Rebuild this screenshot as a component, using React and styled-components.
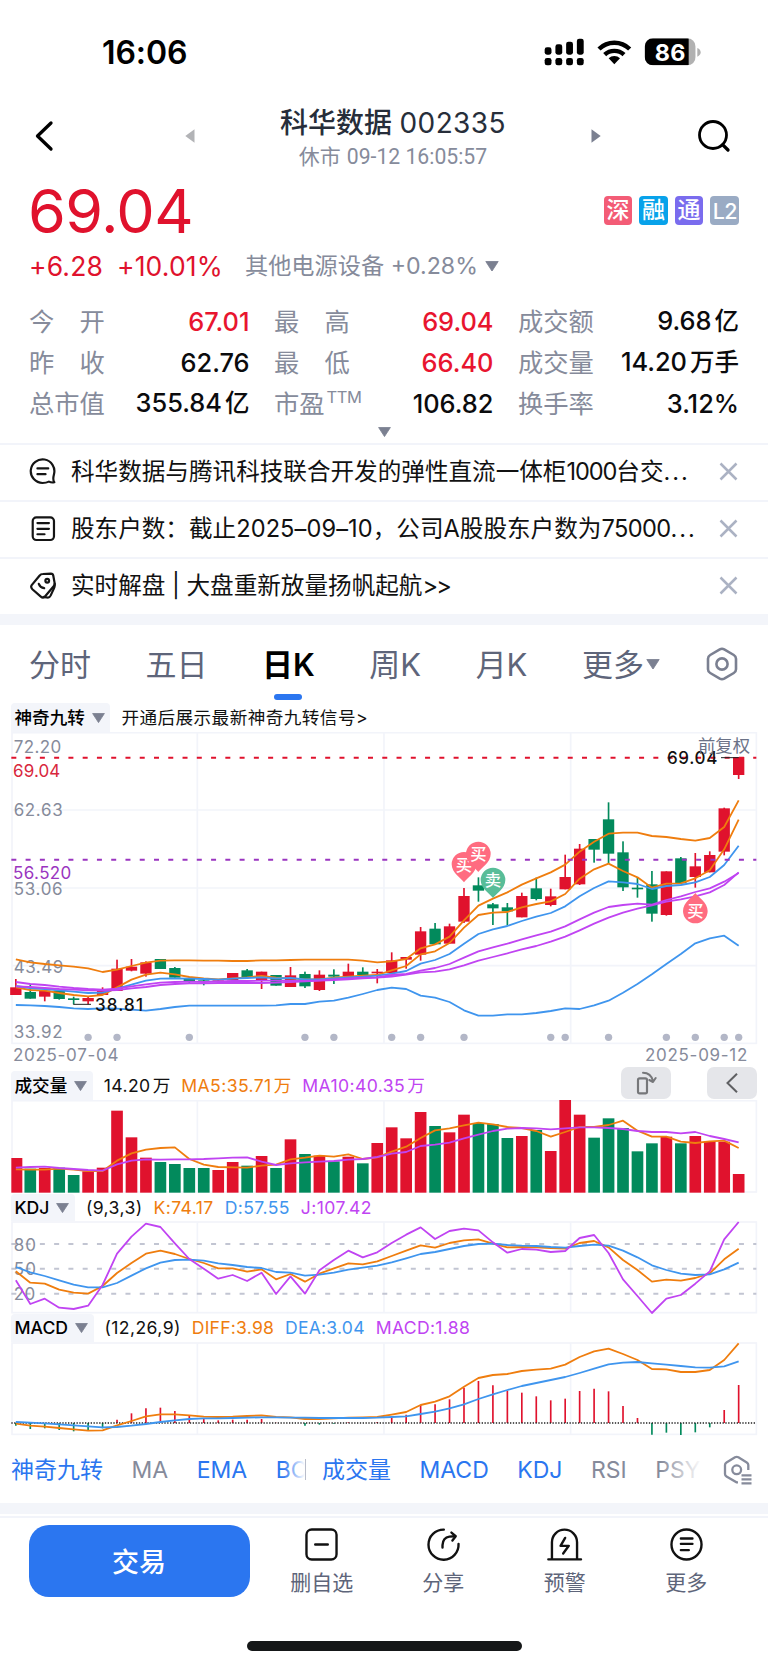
import React from "react";
import styled, { createGlobalStyle } from "styled-components";

const RED = "#e0122d";
const GREEN = "#028a5c";
const ORANGE = "#ef7d0e";
const BLUE = "#3f95ee";
const PURPLE = "#c044f2";
const GREY = "#868b9b";
const LINE = "#f2f4fa";
const PRIMARY = "#2b76f0";

// chart coordinates are in @3x pixels
const cx = i => 47.5 + i * 43.37;

// [up/down, high, body top, body bottom, low]
const candles = [
  ["r", 762, 787, 810, 810], ["g", 780, 801, 821, 821], ["r", 795, 797, 815, 829],
  ["g", 795, 797, 822, 824], ["g", 815, 820, 825, 838], ["r", 815, 819, 829, 838],
  ["r", 787, 798, 810, 810], ["r", 704, 731, 798, 798], ["r", 702, 725, 737, 739],
  ["r", 709, 712, 746, 755], ["g", 702, 702, 732, 732], ["g", 726, 729, 758, 758],
  ["g", 758, 760, 769, 776], ["g", 762, 766, 769, 781], ["r", 765, 766, 768, 768],
  ["r", 744, 744, 766, 771], ["g", 732, 736, 757, 757], ["r", 740, 740, 765, 792],
  ["g", 750, 750, 782, 782], ["r", 726, 751, 786, 786], ["g", 740, 747, 784, 789],
  ["r", 736, 749, 795, 798], ["g", 733, 749, 755, 777], ["r", 716, 740, 754, 754],
  ["g", 727, 740, 750, 750], ["r", 732, 740, 745, 775], ["r", 682, 706, 744, 744],
  ["r", 696, 696, 704, 731], ["r", 606, 619, 689, 707], ["g", 594, 611, 658, 658],
  ["r", 596, 604, 656, 656], ["r", 489, 513, 590, 594], ["g", 457, 481, 497, 530],
  ["g", 534, 538, 550, 600], ["g", 534, 547, 559, 600], ["r", 503, 513, 577, 577],
  ["g", 458, 490, 522, 526], ["r", 491, 514, 540, 544], ["r", 389, 456, 493, 493],
  ["r", 357, 371, 478, 480], ["g", 342, 342, 374, 413], ["g", 232, 283, 386, 415],
  ["g", 349, 382, 487, 498], ["g", 456, 488, 493, 518], ["g", 438, 478, 566, 590],
  ["r", 439, 439, 570, 572], ["g", 396, 400, 475, 475], ["r", 384, 424, 456, 488],
  ["r", 379, 390, 442, 442], ["r", 248, 250, 380, 391], ["r", 96, 96, 150, 162]
];

const upper = [703, 712, 717, 721, 725, 730, 741, 734, 723, 713, 707, 706, 706, 707, 707, 708, 708, 706, 706, 705, 704, 704, 704, 704, 707, 712, 709, 702, 670, 658, 635, 586, 542, 521, 502, 479, 460, 442, 419, 380, 350, 326, 323, 323, 333, 336, 342, 347, 339, 306, 226];
const ema5 = [787, 795, 797, 804, 810, 814, 810, 787, 764, 749, 743, 748, 756, 760, 763, 760, 757, 753, 758, 760, 763, 763, 758, 755, 752, 750, 736, 723, 688, 679, 654, 608, 570, 563, 561, 547, 537, 529, 507, 461, 433, 416, 438, 457, 488, 476, 475, 460, 436, 373, 284];
const ema10 = [783, 789, 792, 796, 800, 804, 803, 791, 779, 767, 761, 760, 761, 762, 764, 761, 759, 757, 760, 759, 763, 763, 760, 757, 755, 752, 746, 738, 716, 705, 687, 656, 627, 613, 603, 588, 575, 564, 544, 514, 489, 469, 472, 477, 492, 483, 480, 472, 456, 420, 362];
const ema20 = [771, 777, 780, 785, 789, 792, 794, 791, 784, 778, 773, 771, 770, 771, 769, 768, 768, 767, 767, 768, 768, 766, 763, 760, 758, 757, 750, 747, 737, 729, 717, 698, 679, 667, 656, 643, 631, 620, 604, 583, 563, 546, 540, 536, 539, 525, 514, 501, 490, 470, 444];
const ema30 = [784, 786, 789, 792, 794, 796, 797, 795, 790, 786, 780, 777, 775, 775, 774, 774, 774, 774, 773, 771, 769, 767, 765, 763, 760, 758, 755, 749, 742, 740, 733, 721, 707, 696, 685, 673, 663, 650, 635, 616, 596, 578, 563, 551, 541, 530, 523, 514, 502, 480, 442];
const lower = [840, 841, 843, 846, 850, 852, 850, 851, 854, 857, 852, 846, 842, 842, 842, 842, 842, 842, 841, 837, 837, 830, 827, 818, 807, 795, 788, 792, 812, 818, 831, 856, 872, 872, 868, 868, 864, 858, 850, 852, 841, 827, 803, 777, 748, 717, 687, 655, 640, 632, 662];
const eventDots = [5, 7, 12, 20, 22, 26, 28, 31, 37, 38, 41, 45, 47, 49, 50];

const volume = [279, 311, 309, 308, 330, 319, 308, 137, 217, 278, 291, 297, 309, 309, 315, 291, 302, 273, 309, 223, 267, 272, 289, 275, 295, 234, 187, 220, 141, 183, 202, 149, 174, 177, 219, 213, 195, 258, 104, 149, 218, 160, 189, 259, 235, 215, 235, 213, 229, 230, 327];
const volMa5 = [313, 314, 314, 311, 314, 318, 318, 287, 265, 254, 249, 247, 282, 299, 306, 307, 308, 302, 299, 283, 278, 272, 275, 268, 282, 277, 260, 245, 219, 196, 190, 181, 173, 178, 186, 189, 198, 215, 201, 186, 186, 180, 167, 197, 215, 215, 230, 234, 229, 227, 249];
const volMa10 = [308, 306, 305, 309, 312, 315, 317, 298, 287, 283, 284, 283, 283, 282, 280, 278, 277, 290, 300, 295, 292, 290, 288, 284, 282, 276, 266, 261, 243, 239, 233, 220, 209, 198, 191, 189, 190, 193, 190, 187, 187, 189, 192, 198, 201, 201, 205, 201, 213, 222, 232];

const kLine = [619, 653, 656, 674, 683, 686, 663, 624, 594, 566, 557, 567, 582, 594, 610, 610, 620, 613, 643, 627, 650, 626, 610, 595, 598, 589, 573, 557, 541, 548, 534, 526, 523, 536, 547, 546, 547, 549, 551, 534, 528, 547, 585, 615, 650, 644, 647, 639, 625, 583, 551];
const dLine = [606, 622, 633, 646, 659, 667, 667, 654, 632, 610, 593, 585, 584, 587, 595, 600, 606, 609, 621, 623, 632, 629, 623, 614, 608, 602, 592, 580, 567, 561, 552, 543, 537, 536, 540, 542, 543, 546, 548, 543, 539, 542, 557, 577, 601, 615, 626, 630, 628, 613, 593];
const jLine = [646, 717, 701, 728, 732, 722, 660, 566, 515, 476, 486, 535, 582, 611, 641, 630, 648, 623, 687, 634, 686, 616, 585, 557, 577, 562, 534, 509, 487, 522, 498, 491, 496, 532, 563, 552, 554, 561, 558, 519, 510, 564, 643, 693, 744, 701, 690, 656, 619, 523, 471];

const macdBars = [1082, 1092, 1090, 1095, 1099, 1096, 1090, 1064, 1045, 1030, 1028, 1038, 1052, 1061, 1066, 1064, 1064, 1062, 1073, 1074, 1082, 1079, 1076, 1072, 1074, 1071, 1058, 1049, 1020, 1018, 1003, 968, 948, 961, 977, 983, 994, 1006, 1001, 978, 971, 979, 1023, 1059, 1109, 1103, 1110, 1102, 1087, 1035, 960];
const diff = [1076, 1082, 1085, 1089, 1093, 1097, 1096, 1081, 1068, 1054, 1048, 1048, 1051, 1055, 1056, 1055, 1053, 1051, 1056, 1057, 1062, 1062, 1060, 1058, 1057, 1056, 1049, 1041, 1020, 1010, 994, 965, 939, 930, 927, 918, 914, 911, 899, 876, 859, 851, 867, 885, 912, 913, 921, 921, 915, 885, 835];
const dea = [1071, 1073, 1075, 1078, 1081, 1084, 1087, 1086, 1082, 1077, 1071, 1066, 1062, 1060, 1060, 1059, 1058, 1057, 1057, 1058, 1058, 1059, 1059, 1059, 1059, 1058, 1056, 1054, 1047, 1040, 1030, 1018, 1002, 988, 975, 963, 954, 945, 936, 924, 911, 898, 893, 891, 895, 899, 903, 907, 908, 904, 889];

const stats = [
  [["今　开", "67.01", "", true], ["最　高", "69.04", "", true], ["成交额", "9.68", "亿"]],
  [["昨　收", "62.76", ""], ["最　低", "66.40", "", true], ["成交量", "14.20", "万手"]],
  [["总市值", "355.84", "亿"], ["市盈", "106.82", ""], ["换手率", "3.12%", ""]]
];

const Caret = ({ w = 13, h = 10, color = "#7b8091" }) => (
  <svg width={w} height={h} viewBox="0 0 13 10">
    <path d="M0.6 0.5H12.4L6.5 9.6Z" fill={color} stroke={color} strokeWidth="0.8" strokeLinejoin="round" />
  </svg>
);

const Polyline = ({ data, color }) => (
  <polyline
    points={data.map((y, i) => `${cx(i).toFixed(1)},${y}`).join(" ")}
    fill="none"
    stroke={color}
    strokeWidth="5.4"
    strokeLinejoin="round"
  />
);

const Frame = ({ top, bottom, rows = [] }) => (
  <g stroke={LINE} strokeWidth="5" fill="none">
    <rect x="36" y={top} width="2233" height={bottom - top} />
    {[592, 1152, 1712].map(x => (
      <path key={x} d={`M${x} ${top}V${bottom}`} />
    ))}
    {rows.map(y => (
      <path key={y} d={`M36 ${y}H2269`} />
    ))}
  </g>
);

const Label = ({ x, y, w, color = GREY, weight = 400, children }) => (
  <text x={x} y={y + 18.5} fill={color} fontSize="51" fontWeight={weight} textLength={w} lengthAdjust="spacing">
    {children}
  </text>
);

const Pin = ({ x, y, color, up, children }) => {
  const s = up ? -1 : 1;
  return (
    <g>
      <path
        d={`M${x} ${y + s * 54}C${x - 8} ${y + s * 42} ${x - 37} ${y + s * 26} ${x - 37} ${y}A37 37 0 0 ${up ? 0 : 1} ${x + 37} ${y}C${x + 37} ${y + s * 26} ${x + 8} ${y + s * 42} ${x} ${y + s * 54}Z`}
        fill={color}
      />
      <text x={x} y={y + 19} fontSize="49" fontWeight="500" fill="#fff" textAnchor="middle">{children}</text>
    </g>
  );
};

const PriceChart = () => (
  <Plot height="313" viewBox="0 21 2304 939">
    <Frame top={23} bottom={955} rows={[255, 489, 722]} />
    <Label x={41} y={65} w={143}>72.20</Label>
    <Label x={41} y={255} w={147}>62.63</Label>
    <Label x={41} y={490} w={147}>53.06</Label>
    <Label x={41} y={724} w={149}>43.49</Label>
    <Label x={41} y={921} w={147}>33.92</Label>
    {candles.map(([dir, hi, top, bottom, lo], i) => (
      <g key={i} fill={dir === "r" ? RED : GREEN}>
        <rect x={cx(i) - 2.5} y={hi} width="5" height={lo - hi} />
        <rect x={cx(i) - 17} y={top} width="34" height={bottom - top} />
      </g>
    ))}
    <Polyline data={upper} color={ORANGE} />
    <Polyline data={ema5} color={ORANGE} />
    <Polyline data={ema10} color={BLUE} />
    <Polyline data={ema20} color={PURPLE} />
    <Polyline data={ema30} color={PURPLE} />
    <Polyline data={lower} color={BLUE} />
    {eventDots.map(i => (
      <circle key={i} cx={cx(i)} cy="937" r="11" fill="#b3b7c7" />
    ))}
    <path d="M34 98H2269" stroke={RED} strokeWidth="6" strokeDasharray="15 27.8" />
    <path d="M34 404H2269" stroke="#9a35c0" strokeWidth="6" strokeDasharray="15 27.8" />
    <Label x={39} y={136} w={142} color="#d8273d">69.04</Label>
    <Label x={39} y={443} w={175} color="#9a35c0">56.520</Label>
    <path d="M220 838H273M2163 98H2216" stroke="#222" strokeWidth="3" />
    <Label x={285} y={838} w={144} color="#111" weight={500}>38.81</Label>
    <Label x={2001} y={98} w={151} color="#111" weight={500}>69.04</Label>
    <text x="2094" y="82" fontSize="52" fill="#6b7287">前复权</text>
    <Pin x={1392} y={418} color="#ff6c80">买</Pin>
    <Pin x={1435} y={387} color="#ff6c80">买</Pin>
    <Pin x={1479} y={465} color="#58bd98">卖</Pin>
    <Pin x={2086} y={558} color="#ff6c80" up>买</Pin>
  </Plot>
);

const VolumeChart = () => (
  <Plot height="94" viewBox="0 105 2304 282">
    <Frame top={107} bottom={381} />
    {volume.map((y, i) => (
      <rect
        key={i}
        x={i === 0 ? 34 : cx(i) - 17.5}
        y={y}
        width={i === 0 ? 33 : 35}
        height={383 - y}
        fill={candles[i][0] === "r" ? RED : GREEN}
      />
    ))}
    <Polyline data={volMa5} color={ORANGE} />
    <Polyline data={volMa10} color={PURPLE} />
  </Plot>
);

const KdjChart = () => (
  <Plot height="93" viewBox="0 468 2304 279">
    <Frame top={471} bottom={743} />
    {[537, 611, 686].map(y => (
      <path key={y} d={`M34 ${y}H2269`} stroke="#c2c5d2" strokeWidth="6" strokeDasharray="15 27.8" />
    ))}
    <Label x={41} y={538} w={67}>80</Label>
    <Label x={41} y={612} w={67}>50</Label>
    <Label x={41} y={687} w={65}>20</Label>
    <Polyline data={kLine} color={ORANGE} />
    <Polyline data={dLine} color={BLUE} />
    <Polyline data={jLine} color={PURPLE} />
  </Plot>
);

const MacdChart = () => (
  <Plot height="94" viewBox="0 831 2304 282">
    <Frame top={834} bottom={1108} />
    {macdBars.map((y, i) => (
      <path key={i} d={`M${cx(i)} 1074V${y}`} stroke={y < 1074 ? RED : GREEN} strokeWidth="5" />
    ))}
    <path d="M34 1074H2269" stroke="#222" strokeWidth="4.5" strokeDasharray="4 4.5" />
    <Polyline data={diff} color={ORANGE} />
    <Polyline data={dea} color={BLUE} />
  </Plot>
);

const StatusIcons = () => (
  <svg width="160" height="30" viewBox="40 35 480 90">
    {[66, 57, 49, 40].map((y, i) => (
      <g key={y}>
        <rect x={45 + i * 32.2} y={y} width="20.5" height={88 - y} rx="7" />
        <rect x={45 + i * 32.2} y="98" width="20.5" height="22" rx="7" />
      </g>
    ))}
    <path d="M208 71A66 66 0 0 1 300 71" fill="none" stroke="#000" strokeWidth="13.5" />
    <path d="M225 88A42 42 0 0 1 283 88" fill="none" stroke="#000" strokeWidth="13" />
    <path d="M237 99A25 25 0 0 1 271 99L254 117Z" />
    <clipPath id="cell">
      <rect x="345" y="39" width="153" height="81" rx="25" />
    </clipPath>
    <g clipPath="url(#cell)">
      <rect x="345" y="39" width="153" height="81" fill="#b1b1b1" />
      <rect x="345" y="39" width="132" height="81" />
    </g>
    <path d="M503 68Q513 72 513 81Q513 90 503 94Z" fill="#b1b1b1" />
    <text x="421" y="106" fontSize="70" fontWeight="700" fill="#fff" textAnchor="middle" textLength="92">86</text>
  </svg>
);

const noticeIcons = {
  chat: (
    <svg width="27" height="27" viewBox="27 22 80 80">
      <path d="M102 94C97 88 98 82 101 70A35 35 0 1 0 67 96Q78 96 86 92Q94 96 102 94Z" />
      <path d="M52 53H84M52 70H76" />
    </svg>
  ),
  doc: (
    <svg width="27" height="27" viewBox="27 194 80 80">
      <rect x="38" y="201" width="63" height="67" rx="11" />
      <path d="M52 218H86M52 235H86M52 251H73" />
    </svg>
  ),
  tag: (
    <svg width="27" height="27" viewBox="27 366 80 80">
      <path d="M35 405L58 377Q62 372 68 372L92 371Q98 371 99 377L103 399Q104 404 100 408L75 438Q69 445 62 439L37 417Q31 411 35 405Z" />
      <path d="M103 401Q104 408 101 414L91 436Q87 444 78 441L70 440" />
      <circle cx="81" cy="392" r="5.5" />
      <path d="M56 401Q60 412 72 414" />
    </svg>
  )
};

const toolIcons = {
  minus: (
    <>
      <rect x="10.5" y="10.5" width="91" height="91" rx="16" />
      <path d="M37 56H75" />
    </>
  ),
  share: (
    <>
      <path d="M57 11A45.5 45.5 0 1 0 101.500 54" />
      <path d="M53 65V58Q54 35 74 32L90 31" />
      <path d="M80 20L93 31L83 44" />
    </>
  ),
  alert: (
    <>
      <path d="M18 101V49a38 38 0 0 1 76 0V101M7 101H106" />
      <path d="M58 36L44 60H69L52 83" />
    </>
  ),
  more: (
    <>
      <circle cx="56" cy="56" r="45.5" />
      <path d="M39 38H74M39 54H74M39 73H63" />
    </>
  )
};

const IndicatorHead = ({ height, name, children }) => (
  <ChartHead height={height}>
    <Picker>
      {name}
      <Caret />
    </Picker>
    {children}
  </ChartHead>
);

const App = () => {
  return (
    <Screen>
      <GlobalStyle />
      <StatusBar>
        <Clock>16:06</Clock>
        <StatusIcons />
      </StatusBar>

      <Header>
        <BackIcon width="20" height="32" viewBox="0 0 20 32">
          <path d="M17 3L3.500 16L17 29" fill="none" stroke="#000" strokeWidth="3.3" strokeLinecap="round" strokeLinejoin="round" />
        </BackIcon>
        <svg width="10" height="14" viewBox="0 0 10 14"><path d="M9.500 .2V13.800L.3 7Z" fill="#b2b3b6" /></svg>
        <Heading>
          <Title>科华数据 <b>002335</b></Title>
          <Subtitle>休市 <span>09-12 16:05:57</span></Subtitle>
        </Heading>
        <svg width="10" height="14" viewBox="0 0 10 14"><path d="M.5 .2V13.800L9.700 7Z" fill="#7b8091" /></svg>
        <SearchIcon width="34" height="34" viewBox="0 0 34 34" fill="none" stroke="#000" strokeWidth="2.8" strokeLinecap="round">
          <circle cx="16" cy="16" r="13.500" />
          <path d="M25.800 25.800L31 31" strokeWidth="3.3" />
        </SearchIcon>
      </Header>

      <Quote>
        <PriceRow>
          <Price>69.04</Price>
          <Badges>
            <Badge bg="#f35c76">深</Badge>
            <Badge bg="#08a2ea">融</Badge>
            <Badge bg="#7a6cee">通</Badge>
            <Badge bg="#9aabc4" latin>L2</Badge>
          </Badges>
        </PriceRow>
        <ChangeRow>
          <Change w={88}>+6.28</Change>
          <Change w={128}>+10.01%</Change>
          <Sector>其他电源设备 <i>+0.28%</i></Sector>
          <Caret w={14} h={10.500} />
        </ChangeRow>
        <Stats>
          {stats.map(row =>
            row.map(([label, value, unit, up]) => (
              <Stat key={label}>
                <StatLabel>
                  {label}
                  {label === "市盈" && <sup>TTM</sup>}
                </StatLabel>
                <StatValue up={up}>
                  {value}
                  {unit && <em>{unit}</em>}
                </StatValue>
              </Stat>
            ))
          )}
        </Stats>
        <Expand>
          <Caret />
        </Expand>
      </Quote>

      <Notice>
        {noticeIcons.chat}
        <p>科华数据与腾讯科技联合开发的弹性直流一体柜<Num gap="-1.1px">1000</Num>台交<Num gap="2px">...</Num></p>
        <CloseIcon />
      </Notice>
      <Notice>
        {noticeIcons.doc}
        <p>股东户数：截止<Num gap="0.1px">2025–09–10</Num>，公司A股股东户数为<Num gap="-0.6px">75000</Num><Num gap="2px">...</Num></p>
        <CloseIcon />
      </Notice>
      <Notice>
        {noticeIcons.tag}
        <p>实时解盘 | 大盘重新放量扬帆起航<Num gap="-1.9px">&gt;&gt;</Num></p>
        <CloseIcon />
      </Notice>
      <Band height={11} />

      <Tabs>
        <Tab>分时</Tab>
        <Tab>五日</Tab>
        <Tab active>日K</Tab>
        <Tab>周K</Tab>
        <Tab>月K</Tab>
        <Tab>更多<Caret w={14} h={10.500} /></Tab>
        <SettingsIcon width="32" height="34" viewBox="0 0 32 34" fill="none" stroke="#7b8091" strokeWidth="2.6" strokeLinejoin="round">
          <path d="M13.800 2.400Q16 1.200 18.200 2.400L27.800 8Q30 9.300 30 11.800V22.200Q30 24.700 27.800 26L18.200 31.600Q16 32.800 13.800 31.600L4.200 26Q2 24.700 2 22.200V11.800Q2 9.300 4.200 8Z" />
          <circle cx="16" cy="17" r="5.600" />
        </SettingsIcon>
      </Tabs>

      <IndicatorHead height={29} name="神奇九转">
        <Legend color="#111" spacing="0.45px">开通后展示最新神奇九转信号&gt;</Legend>
      </IndicatorHead>
      <PriceChart />
      <Dates>
        <span>2025-07-04</span>
        <span>2025-09-12</span>
      </Dates>

      <IndicatorHead height={29} name="成交量">
        <Legend color="#111">14.20<u>万</u></Legend>
        <Legend color={ORANGE}>MA5:35.71<u>万</u></Legend>
        <Legend color={PURPLE}>MA10:40.35<u>万</u></Legend>
        <ChartButtons>
          <ChartButton>
            <svg width="22" height="26" viewBox="0 0 66 78" fill="none" stroke="#76777a" strokeWidth="6.500" strokeLinecap="round" strokeLinejoin="round">
              <rect x="9" y="25" width="27" height="45" rx="5" />
              <path d="M24 8Q48 8 54 33M43 30L54 36L62 24" strokeWidth="6" />
            </svg>
          </ChartButton>
          <ChartButton>
            <svg width="12" height="20" viewBox="0 0 12 20" fill="none" stroke="#5f6063" strokeWidth="2">
              <path d="M11 .8L1.500 10L11 19.200" />
            </svg>
          </ChartButton>
        </ChartButtons>
      </IndicatorHead>
      <VolumeChart />

      <IndicatorHead height={27} name="KDJ">
        <Legend color="#111">(9,3,3)</Legend>
        <Legend color={ORANGE}>K:74.17</Legend>
        <Legend color={BLUE}>D:57.55</Legend>
        <Legend color={PURPLE}>J:107.42</Legend>
      </IndicatorHead>
      <KdjChart />

      <IndicatorHead height={28} name="MACD">
        <Legend color="#111">(12,26,9)</Legend>
        <Legend color={ORANGE} spacing="0.2px">DIFF:3.98</Legend>
        <Legend color={BLUE} spacing="0.2px">DEA:3.04</Legend>
        <Legend color={PURPLE} spacing="0.3px">MACD:1.88</Legend>
      </IndicatorHead>
      <MacdChart />

      <Indicators>
        <MainIndicators>
          <Indicator on>神奇九转</Indicator>
          <Indicator>MA</Indicator>
          <Indicator on>EMA</Indicator>
          <Indicator on>BOLL</Indicator>
        </MainIndicators>
        <Separator />
        <SubIndicators>
          <Indicator on>成交量</Indicator>
          <Indicator on>MACD</Indicator>
          <Indicator on>KDJ</Indicator>
          <Indicator>RSI</Indicator>
          <Indicator>PSY</Indicator>
        </SubIndicators>
        <svg width="30" height="30" viewBox="0 0 30 30" fill="none" stroke="#868b9b" strokeWidth="2.300">
          <path d="M15 27.300L13.500 27.300L3.500 21.500Q2 20.600 2 19V10Q2 8.400 3.500 7.500L12 2.300Q13.700 1.400 15.400 2.300L23.800 7.500Q25.300 8.400 25.300 10V15" />
          <circle cx="13.700" cy="14.800" r="4.400" />
          <path d="M18.500 20.300H28.500M18.500 24.300H28.500M18.500 28.300H28.500" />
        </svg>
      </Indicators>
      <Band height={11} />
      <Hairline />

      <BottomBar>
        <TradeButton>交易</TradeButton>
        {[
          ["minus", "删自选"],
          ["share", "分享"],
          ["alert", "预警"],
          ["more", "更多"]
        ].map(([icon, text]) => (
          <Tool key={icon}>
            <svg width="37" height="37" viewBox="0 0 112 112">{toolIcons[icon]}</svg>
            {text}
          </Tool>
        ))}
      </BottomBar>
      <HomeIndicator />
    </Screen>
  );
};

const CloseIcon = () => (
  <svg width="19" height="19" viewBox="0 0 19 19">
    <path d="M1.500 1.500L17.500 17.500M17.500 1.500L1.500 17.500" stroke="#abb2c3" strokeWidth="2.500" />
  </svg>
);

const GlobalStyle = createGlobalStyle`
  * {
    box-sizing: border-box;
  }
  body {
    margin: 0;
    background: #fff;
    font-family: Inter, "Noto Sans CJK SC", sans-serif;
  }
  svg {
    flex: none;
    display: block;
  }
`;

const Screen = styled.main`
  width: 768px;
  height: 1665px;
  overflow: hidden;
  display: flex;
  flex-direction: column;
  background: #fff;

  > * {
    flex: none;
  }
`;

const StatusBar = styled.div`
  height: 103px;
  padding: 0 65px 0 102px;
  display: flex;
  align-items: center;
  justify-content: space-between;
`;

const Clock = styled.div`
  padding-top: 2px;
  font-size: 32px;
  font-weight: 600;
  line-height: 36px;
  letter-spacing: -0.1px;
`;

const Header = styled.header`
  height: 82px;
  padding: 0 37px 17px 34px;
  display: flex;
  align-items: center;
`;

const BackIcon = styled.svg`
  margin-right: 131px;
`;

const SearchIcon = styled.svg`
  margin-left: 96px;
`;

const Heading = styled.div`
  flex: 1;
  display: flex;
  flex-direction: column;
  align-items: center;
  padding-top: 6px;
`;

const Title = styled.h1`
  margin: 0;
  font-size: 28px;
  font-weight: 500;
  line-height: 36px;
  color: #272e3a;

  b {
    font-weight: 400;
    letter-spacing: 0.4px;
  }
`;

const Subtitle = styled.div`
  font-size: 21px;
  line-height: 32px;
  color: ${GREY};

  span {
    font-family: Roboto, sans-serif;
    font-size: 21.200px;
  }
`;

const Quote = styled.section`
  height: 258px;
  padding: 0 29px;
`;

const PriceRow = styled.div`
  height: 52px;
  display: flex;
  align-items: center;
  justify-content: space-between;
`;

const Price = styled.div`
  margin-left: -1px;
  font-size: 61px;
  line-height: 52px;
  letter-spacing: -0.6px;
  color: ${RED};
`;

const Badges = styled.div`
  margin-top: -2px;
  display: flex;
  gap: 7px;
`;

const Badge = styled.span.withConfig({ shouldForwardProp: p => p !== "bg" && p !== "latin" })`
  width: 28.600px;
  height: 29px;
  border-radius: 4px;
  background: ${({ bg }) => bg};
  color: #fff;
  font-size: ${({ latin }) => (latin ? 21.500 : 23)}px;
  font-weight: 500;
  line-height: ${({ latin }) => (latin ? 31 : 28)}px;
  letter-spacing: ${({ latin }) => (latin ? "-0.8px" : 0)};
  text-align: center;
`;

const ChangeRow = styled.div`
  height: 58px;
  display: flex;
  align-items: center;
  line-height: 57px;
`;

const Change = styled.span`
  width: ${({ w }) => w}px;
  font-size: 26.500px;
  letter-spacing: 0.15px;
  color: ${RED};
`;

const Sector = styled.span`
  margin-right: 7px;
  font-size: 23.200px;
  color: ${GREY};

  i {
    font-style: normal;
  }
`;

const Stats = styled.div`
  padding-top: 5.500px;
  display: grid;
  grid-template-columns: 220.500px 219.500px 221px;
  grid-auto-rows: 41px;
  column-gap: 24.500px;
`;

const Stat = styled.div`
  display: flex;
  align-items: center;
  justify-content: space-between;
  line-height: 41px;
  white-space: nowrap;
`;

const StatLabel = styled.span`
  font-size: 25.300px;
  color: ${GREY};

  sup {
    margin-left: 2px;
    font-size: 16.500px;
    letter-spacing: -0.5px;
    line-height: 0;
    vertical-align: 10px;
  }
`;

const StatValue = styled.span.withConfig({ shouldForwardProp: p => p !== "up" })`
  font-size: 25.400px;
  font-weight: 500;
  color: ${({ up }) => (up ? "#e8152f" : "#0b0b0d")};

  em {
    margin-left: 3px;
    font-style: normal;
    font-size: 24.500px;
  }
`;

const Expand = styled.div`
  padding-top: 3.500px;
  display: flex;
  justify-content: center;
`;

const Notice = styled.div`
  height: 57px;
  padding: 0 30px 2px 29px;
  border-top: 2px solid ${LINE};
  display: flex;
  align-items: center;

  p {
    flex: 1;
    margin: 0 0 0 15px;
    font-size: 23.600px;
    line-height: 40px;
    white-space: nowrap;
    color: #111;
  }

  > svg:first-child {
    fill: none;
    stroke: #151515;
    stroke-width: 6.500;
    stroke-linecap: round;
    stroke-linejoin: round;
  }
`;

const Num = styled.span.withConfig({ shouldForwardProp: p => p !== "gap" })`
  letter-spacing: ${({ gap }) => gap};
`;

const Band = styled.div`
  height: ${({ height }) => height}px;
  background: #f3f5fa;
`;

const Tabs = styled.nav`
  height: 78px;
  padding: 0 30px 0 29px;
  display: flex;
  align-items: center;
`;

const SettingsIcon = styled.svg`
  margin-left: auto;
`;

const Tab = styled.div.withConfig({ shouldForwardProp: p => p !== "active" })`
  position: relative;
  flex: none;
  display: flex;
  align-items: center;
  gap: 2px;
  font-size: 31px;
  font-weight: ${({ active }) => (active ? 600 : 400)};
  line-height: 77px;
  white-space: nowrap;
  color: ${({ active }) => (active ? "#000" : "#5e657a")};

  & + & {
    margin-left: 54.500px;
  }

  &::after {
    content: "";
    display: ${({ active }) => (active ? "block" : "none")};
    position: absolute;
    left: calc(50% - 14px);
    bottom: 3px;
    width: 28px;
    height: 6px;
    border-radius: 3px;
    background: ${PRIMARY};
  }
`;

const ChartHead = styled.div.withConfig({ shouldForwardProp: p => p !== "height" })`
  height: ${({ height }) => height}px;
  padding: 0 11px;
  display: flex;
  align-items: center;
  font-size: 17.600px;
  line-height: 26px;
`;

const Picker = styled.div`
  height: 100%;
  margin-right: 11px;
  padding: 0 5.500px 0 3.500px;
  border-radius: 4px 4px 0 0;
  background: #f3f5fa;
  display: flex;
  align-items: center;
  gap: 7px;
  font-weight: 500;
`;

const Legend = styled.span.withConfig({ shouldForwardProp: p => p !== "spacing" })`
  margin-right: 11px;
  white-space: nowrap;
  letter-spacing: ${({ spacing }) => spacing || "0.4px"};
  color: ${({ color }) => color};

  u {
    margin-left: 2px;
    text-decoration: none;
    letter-spacing: 0;
  }
`;

const Plot = styled.svg`
  width: 768px;
`;

const Dates = styled.div`
  height: 26px;
  padding: 0 20px 7px 13px;
  display: flex;
  align-items: center;
  justify-content: space-between;
  font-size: 17px;
  letter-spacing: 0.7px;
  color: ${GREY};
`;

const ChartButtons = styled.div`
  margin: -6px 0 0 auto;
  display: flex;
  gap: 36px;
`;

const ChartButton = styled.button`
  width: 50px;
  height: 32px;
  padding: 0;
  border: 0;
  border-radius: 7px;
  background: #e5e6ea;
  display: flex;
  align-items: center;
  justify-content: center;
`;

const Indicators = styled.div`
  height: 67px;
  padding-left: 11px;
  display: flex;
  align-items: center;
  line-height: 40px;
`;

const MainIndicators = styled.div`
  position: relative;
  width: 294px;
  height: 30px;
  overflow: hidden;
  display: flex;
  align-items: center;
  gap: 28.500px;

  &::after {
    content: "";
    position: absolute;
    top: 0;
    right: 0;
    width: 22px;
    height: 30px;
    background: linear-gradient(90deg, rgba(255, 255, 255, 0), #fff);
  }
`;

const Separator = styled.i`
  width: 1px;
  height: 21px;
  background: #b9bdca;
`;

const SubIndicators = styled(MainIndicators)`
  width: 396px;
  padding-left: 16px;
  margin-right: 21px;

  &::after {
    width: 42px;
  }
`;

const Indicator = styled.span.withConfig({ shouldForwardProp: p => p !== "on" })`
  font-size: 23px;
  white-space: nowrap;
  color: ${({ on }) => (on ? PRIMARY : GREY)};
`;

const Hairline = styled.div`
  height: 4px;
  border-bottom: 2px solid ${LINE};
`;

const BottomBar = styled.div`
  height: 92px;
  padding: 7px 21px 0 29px;
  display: flex;
`;

const TradeButton = styled.button`
  width: 221px;
  height: 72px;
  margin-right: 11px;
  padding: 0 1px 2px 0;
  border: 0;
  border-radius: 20px;
  background: ${PRIMARY};
  color: #fff;
  font: 500 27px Inter, "Noto Sans CJK SC", sans-serif;
`;

const Tool = styled.div`
  flex: 1;
  display: flex;
  flex-direction: column;
  align-items: center;
  padding-top: 1px;
  font-size: 21px;
  line-height: 40px;
  color: #5e657a;

  svg {
    fill: none;
    stroke: #111;
    stroke-width: 7.200;
    stroke-linecap: round;
    stroke-linejoin: round;
  }
`;

const HomeIndicator = styled.div`
  width: 275px;
  height: 10px;
  margin: 31px auto 0;
  border-radius: 5px;
  background: #151718;
`;

export default App;
